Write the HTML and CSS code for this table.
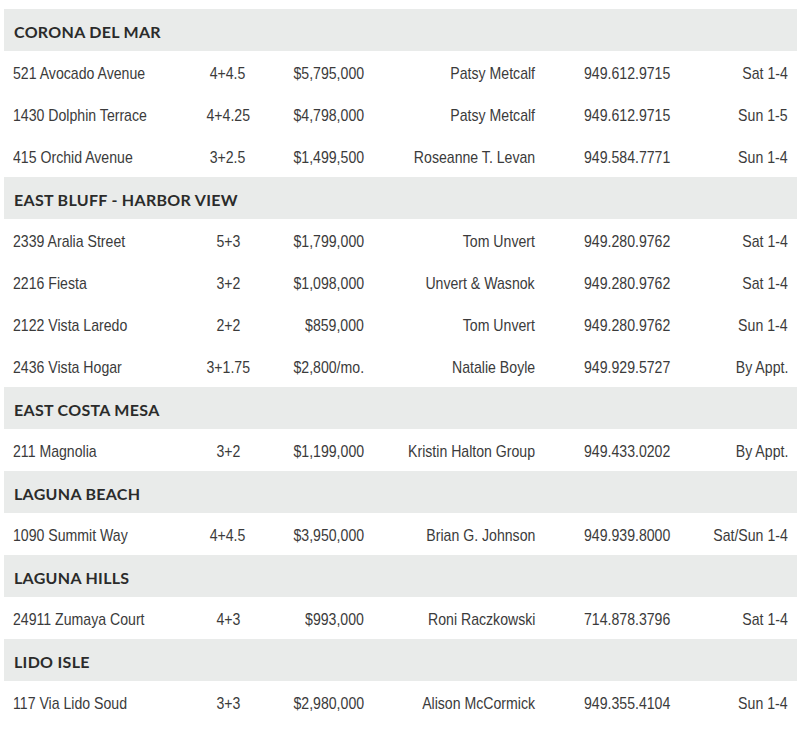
FILE: index.html
```html
<!DOCTYPE html>
<html>
<head>
<meta charset="utf-8">
<link rel="stylesheet" href="styles.css">
</head>
<body>
<div class="listings">
  <div class="area">CORONA DEL MAR</div>
  <div class="row"><span class="addr">521 Avocado Avenue</span><span class="beds">4+4.5</span><span class="price">$5,795,000</span><span class="agent">Patsy Metcalf</span><span class="phone">949.612.9715</span><span class="time">Sat 1-4</span></div>
  <div class="row"><span class="addr">1430 Dolphin Terrace</span><span class="beds">4+4.25</span><span class="price">$4,798,000</span><span class="agent">Patsy Metcalf</span><span class="phone">949.612.9715</span><span class="time">Sun 1-5</span></div>
  <div class="row"><span class="addr">415 Orchid Avenue</span><span class="beds">3+2.5</span><span class="price">$1,499,500</span><span class="agent">Roseanne T. Levan</span><span class="phone">949.584.7771</span><span class="time">Sun 1-4</span></div>
  <div class="area">EAST BLUFF - HARBOR VIEW</div>
  <div class="row"><span class="addr">2339 Aralia Street</span><span class="beds">5+3</span><span class="price">$1,799,000</span><span class="agent">Tom Unvert</span><span class="phone">949.280.9762</span><span class="time">Sat 1-4</span></div>
  <div class="row"><span class="addr">2216 Fiesta</span><span class="beds">3+2</span><span class="price">$1,098,000</span><span class="agent">Unvert &amp; Wasnok</span><span class="phone">949.280.9762</span><span class="time">Sat 1-4</span></div>
  <div class="row"><span class="addr">2122 Vista Laredo</span><span class="beds">2+2</span><span class="price">$859,000</span><span class="agent">Tom Unvert</span><span class="phone">949.280.9762</span><span class="time">Sun 1-4</span></div>
  <div class="row"><span class="addr">2436 Vista Hogar</span><span class="beds">3+1.75</span><span class="price">$2,800/mo.</span><span class="agent">Natalie Boyle</span><span class="phone">949.929.5727</span><span class="time">By Appt.</span></div>
  <div class="area">EAST COSTA MESA</div>
  <div class="row"><span class="addr">211 Magnolia</span><span class="beds">3+2</span><span class="price">$1,199,000</span><span class="agent">Kristin Halton Group</span><span class="phone">949.433.0202</span><span class="time">By Appt.</span></div>
  <div class="area">LAGUNA BEACH</div>
  <div class="row"><span class="addr">1090 Summit Way</span><span class="beds">4+4.5</span><span class="price">$3,950,000</span><span class="agent">Brian G. Johnson</span><span class="phone">949.939.8000</span><span class="time">Sat/Sun 1-4</span></div>
  <div class="area">LAGUNA HILLS</div>
  <div class="row"><span class="addr">24911 Zumaya Court</span><span class="beds">4+3</span><span class="price">$993,000</span><span class="agent">Roni Raczkowski</span><span class="phone">714.878.3796</span><span class="time">Sat 1-4</span></div>
  <div class="area">LIDO ISLE</div>
  <div class="row"><span class="addr">117 Via Lido Soud</span><span class="beds">3+3</span><span class="price">$2,980,000</span><span class="agent">Alison McCormick</span><span class="phone">949.355.4104</span><span class="time">Sun 1-4</span></div>
</div>
</body>
</html>
```
FILE: styles.css
```css
html, body {
  margin: 0;
  padding: 0;
  background: #ffffff;
}
body {
  padding: 9px 3px 0 4px;
}
.listings {
  width: 793px;
}
.area {
  height: 42px;
  box-sizing: border-box;
  padding: 2px 9px 0 10px;
  display: flex;
  align-items: center;
  background: #e9ebea;
  color: #2b2b2b;
  font-family: Lato, "Noto Sans", sans-serif;
  font-weight: 700;
  font-size: 16px;
  letter-spacing: 0.3px;
}
.row {
  height: 42px;
  box-sizing: border-box;
  padding: 4px 9px 0;
  display: grid;
  grid-template-columns: 177px 76px 98px 171px 145px 108px;
  align-items: center;
  color: #3b3b3b;
  font-family: "Liberation Sans", Arial, sans-serif;
  font-size: 17px;
  white-space: nowrap;
}
.row span {
  display: block;
  transform: scaleX(0.83);
}
.addr { justify-self: start; transform-origin: left center; }
.beds { justify-self: center; transform-origin: center center; }
.price { justify-self: end; transform-origin: right center; }
.agent { justify-self: end; transform-origin: right center; }
.phone { justify-self: start; margin-left: 49px; transform-origin: left center; }
.time { justify-self: end; transform-origin: right center; }
```
